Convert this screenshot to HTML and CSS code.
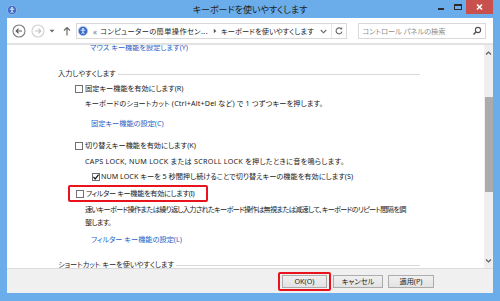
FILE: index.html
```html
<!DOCTYPE html>
<html lang="ja">
<head>
<meta charset="utf-8">
<title>キーボードを使いやすくします</title>
<link rel="stylesheet" href="styles.css">
</head>
<body>
<div class="window">
  <header class="titlebar">
    <div class="tb-left">
      <svg class="app-icon" viewBox="0 0 10 10" width="10" height="10"><circle cx="5" cy="5" r="4.6" fill="#3a6cc6" stroke="#a9c0e6" stroke-width=".7"/><circle cx="5" cy="2.8" r=".9" fill="#fff"/><path d="M2.7 4.2H7.3M5 4.2V6.1L3.7 7.9M5 6.1L6.3 7.9" stroke="#fff" stroke-width=".9" fill="none"/></svg>
    </div>
    <div class="title">キーボードを使いやすくします</div>
    <div class="tb-right">
      <span class="wbtn"><svg viewBox="0 0 14 14" width="14" height="14"><rect x="4" y="8" width="6" height="2" fill="#2b2b2b"/></svg></span>
      <span class="wbtn"><svg viewBox="0 0 14 14" width="14" height="14"><rect x="3.5" y="4.5" width="7" height="5" fill="none" stroke="#2b2b2b"/><rect x="3" y="4" width="8" height="2" fill="#2b2b2b"/></svg></span>
      <span class="wbtn close"><svg viewBox="0 0 27 14" width="27" height="14"><path d="M11 4.5L16 9.5M16 4.5L11 9.5" stroke="#fff" stroke-width="1.6"/></svg></span>
    </div>
  </header>

  <nav class="toolbar">
    <span class="nav back"><svg viewBox="0 0 14 14" width="14" height="14"><circle cx="7" cy="7" r="6" fill="#fff" stroke="#7d7d7d" stroke-width="1.1"/><path d="M10 7H4.2M6.6 4.6L4.2 7L6.6 9.4" stroke="#5a5a5a" stroke-width="1.2" fill="none"/></svg></span>
    <span class="nav fwd"><svg viewBox="0 0 14 14" width="14" height="14"><circle cx="7" cy="7" r="6" fill="#fff" stroke="#d0d0d0" stroke-width="1.1"/><path d="M4 7H9.8M7.4 4.6L9.8 7L7.4 9.4" stroke="#c4c4c4" stroke-width="1.2" fill="none"/></svg></span>
    <span class="nav drop"><svg viewBox="0 0 6 4" width="6" height="4"><path d="M0.5 0.8H5.5L3 3.4Z" fill="#6a6a6a"/></svg></span>
    <span class="nav up"><svg viewBox="0 0 8 10" width="8" height="10"><path d="M4 9.5V1.5M1 4.5L4 1.5L7 4.5" stroke="#6a6a6a" stroke-width="1.2" fill="none"/></svg></span>
    <div class="address">
      <svg class="addr-icon" viewBox="0 0 10 10" width="10" height="10"><circle cx="5" cy="5" r="4.6" fill="#3a6cc6" stroke="#a9c0e6" stroke-width=".7"/><circle cx="5" cy="2.8" r=".9" fill="#fff"/><path d="M2.7 4.2H7.3M5 4.2V6.1L3.7 7.9M5 6.1L6.3 7.9" stroke="#fff" stroke-width=".9" fill="none"/></svg>
      <span class="chev-l">«</span>
      <span class="crumb">コンピューターの簡単操作セン...</span>
      <svg class="crumb-arrow" viewBox="0 0 4 6" width="4" height="6"><path d="M0.8 0.8L3.3 3L0.8 5.2Z" fill="#555"/></svg>
      <span class="crumb">キーボードを使いやすくします</span>
      <span class="spacer"></span>
      <span class="addr-drop"><svg viewBox="0 0 7 5" width="7" height="5"><path d="M0.8 1L3.5 3.8L6.2 1" stroke="#666" stroke-width="1.1" fill="none"/></svg></span>
      <span class="addr-refresh"><svg viewBox="0 0 10 10" width="10" height="10"><path d="M7.6 3.2A3 3 0 1 0 8 5.6" stroke="#6a6a6a" stroke-width="1.1" fill="none"/><path d="M5.8 3.3H8.2V0.9Z" fill="#6a6a6a"/></svg></span>
    </div>
    <div class="search">
      <span class="placeholder">コントロール パネルの検索</span>
      <svg class="mag" viewBox="0 0 10 10" width="10" height="10"><circle cx="6" cy="4" r="2.6" stroke="#505050" stroke-width="1.1" fill="none"/><path d="M4.2 5.8L1.5 8.5" stroke="#505050" stroke-width="1.5"/></svg>
    </div>
  </nav>

  <main class="body">
    <div class="viewport">
      <div class="content">
        <a class="link first">マウス キー機能を設定します(Y)</a>

        <h2 class="group g1">入力しやすくします</h2>
        <label class="check c1"><span class="box"></span>固定キー機能を有効にします(R)</label>
        <p class="desc d1">キーボードのショートカット (Ctrl+Alt+Del など) で 1 つずつキーを押します。</p>
        <a class="link l1">固定キー機能の設定(C)</a>

        <label class="check c2"><span class="box"></span>切り替えキー機能を有効にします(K)</label>
        <p class="desc d2">CAPS LOCK, NUM LOCK または SCROLL LOCK を押したときに音を鳴らします。</p>
        <label class="check sub"><span class="box checked"><svg viewBox="0 0 8 8" width="8" height="8"><path d="M1.4 3.9L3.2 5.9L6.6 1.6" stroke="#1e1e1e" stroke-width="1.3" fill="none"/></svg></span>NUM LOCK キーを 5 秒間押し続けることで切り替えキーの機能を有効にします(S)</label>

        <div class="highlight">
          <label class="check c3"><span class="box"></span>フィルター キー機能を有効にします(I)</label>
        </div>
        <p class="desc d3">速いキーボード操作または繰り返し入力されたキーボード操作は無視または減速して、キーボードのリピート間隔を調<br>整します。</p>
        <a class="link l3">フィルター キー機能の設定(L)</a>

        <h2 class="group g2">ショートカット キーを使いやすくします</h2>
      </div>
    </div>
    <div class="scrollbar">
      <span class="sb-arrow"><svg viewBox="0 0 9 6" width="9" height="6"><path d="M2 4.5L4.5 2L7 4.5" stroke="#606060" stroke-width="1.2" fill="none"/></svg></span>
      <div class="sb-track"><div class="sb-thumb"></div></div>
      <span class="sb-arrow"><svg viewBox="0 0 9 6" width="9" height="6"><path d="M2 1.5L4.5 4L7 1.5" stroke="#606060" stroke-width="1.2" fill="none"/></svg></span>
    </div>
  </main>

  <footer class="footer">
    <span class="btn-mark"><button class="btn ok">OK(O)</button></span>
    <button class="btn cancel">キャンセル</button>
    <button class="btn apply">適用(P)</button>
  </footer>
</div>
</body>
</html>
```

FILE: styles.css
```css
* { box-sizing: border-box; margin: 0; padding: 0; }

html, body { width: 500px; height: 301px; overflow: hidden; }

body {
  background: #6badeb;
  font-family: "Noto Sans", "Noto Sans CJK JP", sans-serif;
  font-size: 7.2px;
  line-height: 13px;
  font-feature-settings: "palt";
  color: #1a1a1a;
}

.window {
  width: 500px;
  height: 301px;
  display: flex;
  flex-direction: column;
  padding: 0 7px 8px 7px;
  background: #6badeb;
}

/* title bar */
.titlebar {
  height: 18px;
  flex: none;
  display: grid;
  grid-template-columns: 1fr auto 1fr;
  align-items: start;
}
.tb-left { padding-top: 5px; }
.app-icon { display: block; }
.title {
  font-family: "Noto Sans CJK JP", sans-serif;
  font-size: 9px;
  line-height: 18px;
  padding-top: 1px;
  color: #222;
}
.tb-right { display: flex; justify-content: flex-end; }
.wbtn { display: block; width: 14px; height: 14px; }
.wbtn + .wbtn { margin-left: 3px; }
.wbtn svg { display: block; }
.wbtn.close { width: 27px; background: #c8514e; margin-left: 1px; }

/* toolbar */
.toolbar {
  height: 27px;
  flex: none;
  background: #fff;
  border-bottom: 2px solid #e2e2e2;
  display: flex;
  align-items: center;
  padding: 1px 7px 0 5px;
}
.nav { display: flex; align-items: center; justify-content: center; }
.nav svg { display: block; }
.back { width: 14px; }
.fwd { width: 14px; margin-left: 5px; }
.drop { width: 6px; margin-left: 4px; }
.up { width: 8px; margin-left: 8px; }

.address {
  margin-left: 5px;
  width: 272px;
  height: 16px;
  border: 1px solid #d9d9d9;
  display: flex;
  align-items: center;
  padding-left: 1px;
  white-space: nowrap;
  color: #1e1e1e;
}
.addr-icon { display: block; flex: none; }
.chev-l { color: #777; margin-left: 5px; font-size: 8px; }
.crumb { margin-left: 3px; letter-spacing: 0.4px; }
.crumb-arrow { display: block; margin-left: 5px; flex: none; }
.crumb-arrow + .crumb { margin-left: 4px; letter-spacing: 0.1px; }
.spacer { flex: 1; }
.addr-drop { display: flex; align-items: center; padding-right: 4px; height: 100%; border-right: 1px solid #e6e6e6; }
.addr-drop svg, .addr-refresh svg { display: block; }
.addr-refresh { display: flex; align-items: center; padding: 0 2px 0 2px; }

.search {
  margin-left: 11px;
  width: 128px;
  height: 16px;
  border: 1px solid #d9d9d9;
  display: flex;
  align-items: center;
  justify-content: space-between;
  padding: 0 3px 0 3px;
}
.placeholder { color: #8c8c8c; white-space: nowrap; }
.mag { display: block; }

/* body */
.body {
  flex: 1;
  min-height: 0;
  display: flex;
}
.viewport {
  flex: 1;
  background: #fff;
  overflow: hidden;
}
.content {
  padding-left: 51px;
  white-space: nowrap;
}

.link { display: block; color: #2a62c6; text-decoration: none; margin-left: 33px; }
.link.first { margin-top: -4px; margin-left: 32px; }

.group {
  font-size: 7.2px;
  font-weight: normal;
  width: 362px;
  display: flex;
  align-items: center;
  color: #1e1e1e;
}
.group::after {
  content: "";
  flex: 1;
  border-top: 1px solid #d9d9d9;
  margin-left: 2px;
  margin-top: 2px;
}
.g1 { margin-top: 13px; }
.g2 { margin-top: 12px; }

.check { display: flex; align-items: center; margin-left: 17px; }
.box {
  width: 8px;
  height: 8px;
  border: 1px solid #707070;
  background: #fff;
  margin-right: 2px;
  flex: none;
  position: relative;
}
.box.checked svg { position: absolute; left: -1px; top: -1px; }
.c1 { margin-top: 2px; }
.c2 { margin-top: 9px; }
.sub { margin-left: 34px; margin-top: 2px; }
.sub .box { margin-right: 1px; }

.desc { margin-left: 27px; }
.d1 { margin-top: 2px; letter-spacing: 0.15px; }
.d2 { margin-top: 3px; letter-spacing: 0.25px; }
.d3 { margin-top: 1px; letter-spacing: -0.7px; }

.l1 { margin-top: 7px; }
.l3 { margin-top: 4px; }

.highlight {
  margin-top: 2px;
  margin-left: 10px;
  width: 140px;
  height: 17px;
  border: 2px solid #e8131d;
  border-radius: 2px;
  display: flex;
  align-items: center;
  padding-left: 6px;
}
.highlight .check { margin-left: 0; letter-spacing: -0.35px; }

/* scrollbar */
.scrollbar {
  width: 9px;
  flex: none;
  background: #efefef;
  display: flex;
  flex-direction: column;
}
.sb-arrow { height: 15px; display: flex; align-items: center; justify-content: center; }
.sb-arrow svg { display: block; }
.sb-track { flex: 1; padding-top: 37px; }
.sb-thumb { width: 8px; height: 95px; background: #ababab; margin-left: 1px; }

/* footer */
.footer {
  height: 25px;
  flex: none;
  background: #f0f0f0;
  border-top: 1px solid #dcdcdc;
  display: flex;
  justify-content: flex-end;
  align-items: center;
  padding: 1px 59px 0 0;
}
.btn {
  font-family: inherit;
  font-size: 7.2px;
  font-feature-settings: "palt";
  color: #1e1e1e;
  height: 13px;
  line-height: 11px;
  background: linear-gradient(#f0f0f0, #e3e3e3);
  border: 1px solid #acacac;
  display: block;
}
.btn-mark {
  display: block;
  border: 2px solid #e8131d;
  border-radius: 2px;
  padding: 1px 2px;
  margin-right: 2px;
}
.ok { width: 45px; }
.cancel { width: 50px; }
.apply { width: 46px; margin-left: 5px; }
```
